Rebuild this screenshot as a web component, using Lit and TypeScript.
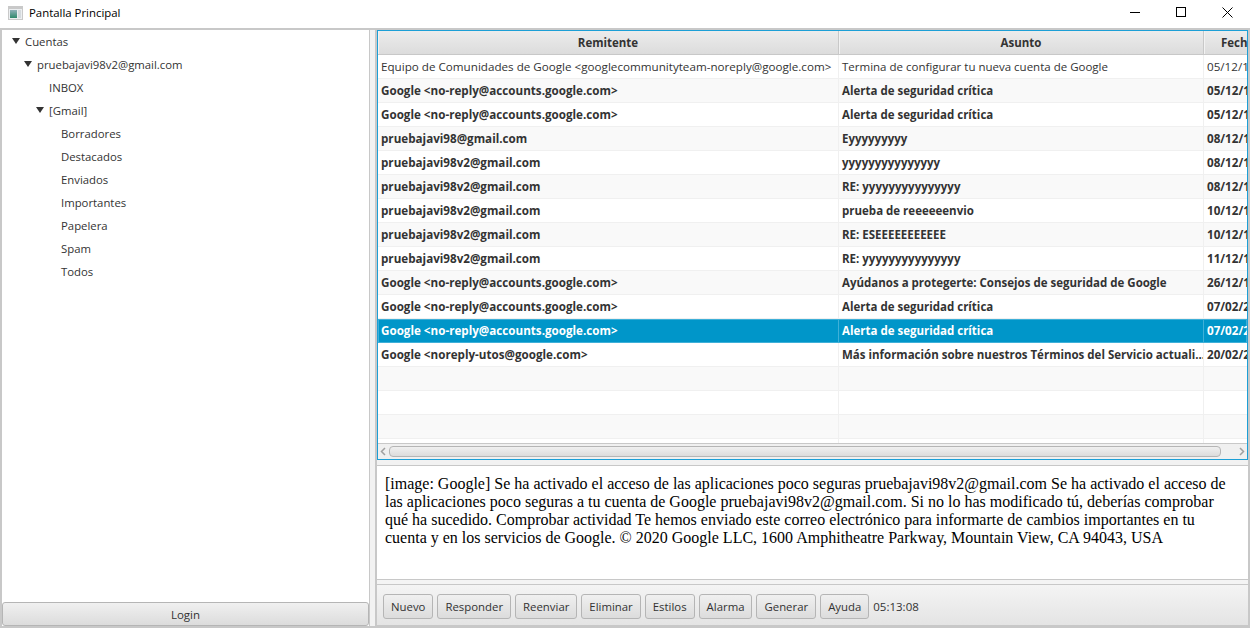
import { LitElement, html, css } from 'lit';
import { customElement } from 'lit/decorators.js';

type Mail = { from: string; subject: string; date: string; read?: boolean; selected?: boolean };

const MAILS: Mail[] = [
  { from: 'Equipo de Comunidades de Google <googlecommunityteam-noreply@google.com>', subject: 'Termina de configurar tu nueva cuenta de Google', date: '05/12/19', read: true },
  { from: 'Google <no-reply@accounts.google.com>', subject: 'Alerta de seguridad crítica', date: '05/12/19' },
  { from: 'Google <no-reply@accounts.google.com>', subject: 'Alerta de seguridad crítica', date: '05/12/19' },
  { from: 'pruebajavi98@gmail.com', subject: 'Eyyyyyyyyy', date: '08/12/19' },
  { from: 'pruebajavi98v2@gmail.com', subject: 'yyyyyyyyyyyyyyy', date: '08/12/19' },
  { from: 'pruebajavi98v2@gmail.com', subject: 'RE: yyyyyyyyyyyyyyy', date: '08/12/19' },
  { from: 'pruebajavi98v2@gmail.com', subject: 'prueba de reeeeeenvio', date: '10/12/19' },
  { from: 'pruebajavi98v2@gmail.com', subject: 'RE: ESEEEEEEEEEEE', date: '10/12/19' },
  { from: 'pruebajavi98v2@gmail.com', subject: 'RE: yyyyyyyyyyyyyyy', date: '11/12/19' },
  { from: 'Google <no-reply@accounts.google.com>', subject: 'Ayúdanos a protegerte: Consejos de seguridad de Google', date: '26/12/19' },
  { from: 'Google <no-reply@accounts.google.com>', subject: 'Alerta de seguridad crítica', date: '07/02/20' },
  { from: 'Google <no-reply@accounts.google.com>', subject: 'Alerta de seguridad crítica', date: '07/02/20', selected: true },
  { from: 'Google <noreply-utos@google.com>', subject: 'Más información sobre nuestros Términos del Servicio actuali...', date: '20/02/20' },
];

const TREE: { label: string; level: number; open?: boolean }[] = [
  { label: 'Cuentas', level: 0, open: true },
  { label: 'pruebajavi98v2@gmail.com', level: 1, open: true },
  { label: 'INBOX', level: 2 },
  { label: '[Gmail]', level: 2, open: true },
  { label: 'Borradores', level: 3 },
  { label: 'Destacados', level: 3 },
  { label: 'Enviados', level: 3 },
  { label: 'Importantes', level: 3 },
  { label: 'Papelera', level: 3 },
  { label: 'Spam', level: 3 },
  { label: 'Todos', level: 3 },
];

const BUTTONS = ['Nuevo', 'Responder', 'Reenviar', 'Eliminar', 'Estilos', 'Alarma', 'Generar', 'Ayuda'];

const BODY =
  '[image: Google] Se ha activado el acceso de las aplicaciones poco seguras pruebajavi98v2@gmail.com Se ha activado el acceso de las aplicaciones poco seguras a tu cuenta de Google pruebajavi98v2@gmail.com. Si no lo has modificado tú, deberías comprobar qué ha sucedido. Comprobar actividad Te hemos enviado este correo electrónico para informarte de cambios importantes en tu cuenta y en los servicios de Google. © 2020 Google LLC, 1600 Amphitheatre Parkway, Mountain View, CA 94043, USA';

@customElement('app-root')
export class AppRoot extends LitElement {
  static styles = css`
    :host {
      display: flex;
      flex-direction: column;
      width: 1250px;
      height: 628px;
      overflow: hidden;
      background: #fff;
      font-family: 'Open Sans', 'Noto Sans', sans-serif;
      font-size: 11.5px;
      color: #333;
    }

    .titlebar {
      display: flex;
      align-items: center;
      height: 28px;
      padding-bottom: 3px;
      box-sizing: border-box;
      flex: none;
      background: #fff;
      color: #000;
    }
    .titlebar .app-icon {
      margin-left: 8px;
      margin-right: 6px;
    }
    .titlebar .title {
      flex: 1;
      font-size: 11.4px;
    }
    .win-btn {
      width: 46px;
      height: 25px;
      display: flex;
      align-items: center;
      justify-content: center;
    }

    .main {
      flex: 1;
      display: flex;
      min-height: 0;
      background: #c8c8c8;
      padding: 2px 2px 2px 2px;
    }

    .left {
      width: 367px;
      flex: none;
      display: flex;
      flex-direction: column;
      background: #fff;
    }
    .tree {
      flex: 1;
      font-size: 11.35px;
    }
    .tree-row {
      display: flex;
      align-items: center;
      height: 23px;
    }
    .arrow {
      width: 8px;
      height: 6px;
      flex: none;
      margin-right: 5px;
      margin-top: -1px;
    }
    .login {
      height: 24px;
      flex: none;
      display: flex;
      align-items: center;
      justify-content: center;
      box-sizing: border-box;
      border: 1px solid #b5b5b5;
      border-radius: 3px;
      background: linear-gradient(#f0f0f0, #dcdcdc);
    }

    .divider {
      width: 8px;
      flex: none;
      background: #f2f2f2;
      border-left: 1px solid #c8c8c8;
      border-right: 2px solid #c8c8c8;
      box-sizing: border-box;
    }

    .right {
      flex: 1;
      min-width: 0;
      display: flex;
      flex-direction: column;
      background: #f4f4f4;
      margin-bottom: 1px;
    }

    .table {
      height: 430px;
      flex: none;
      box-sizing: border-box;
      border: 1px solid #1c9fd6;
      background: #fff;
      display: flex;
      flex-direction: column;
      overflow: hidden;
      position: relative;
    }
    .cols {
      display: grid;
      grid-template-columns: 461px 365px 1fr;
    }
    .head {
      height: 24px;
      flex: none;
      background: linear-gradient(#ececec, #dcdcdc);
      border-bottom: 1px solid #c8c8c8;
      box-sizing: border-box;
      font-weight: 700;
      font-size: 11.5px;
    }
    .head > div {
      display: flex;
      align-items: center;
      justify-content: center;
      border-right: 1px solid #c8c8c8;
      box-shadow: inset 1px 0 0 #f2f2f2;
    }
    .head > div:last-child {
      justify-content: flex-start;
      padding-left: 17px;
      border-right: none;
    }
    .row {
      height: 24px;
      flex: none;
      box-sizing: border-box;
      border-bottom: 1px solid #f0f0f0;
      background: #fff;
      font-weight: 700;
      font-size: 11.65px;
      line-height: 24px;
    }
    .row:nth-child(even) {
      background: #f9f9f9;
    }
    .row.read {
      font-weight: 400;
    }
    .row > div {
      padding: 0 3px;
      border-right: 1px solid #f0f0f0;
      white-space: nowrap;
      overflow: hidden;
    }
    .row > div:nth-child(2) {
      font-size: 11.5px;
    }
    .row > div:last-child {
      border-right: none;
    }
    .row.selected {
      background: #0096c9;
      color: #fff;
      border-bottom: none;
      box-shadow: inset 0 0 0 1px #3fb0d8;
    }
    .row.selected > div {
      border-right-color: #3fb0d8;
    }

    .hbar {
      position: absolute;
      left: 0;
      right: 0;
      bottom: 0;
      height: 13px;
      padding: 1px 0;
      box-sizing: content-box;
      display: flex;
      align-items: center;
      background: #f0f0f0;
      border-top: 1px solid #c8c8c8;
    }
    .hbar svg {
      flex: none;
      width: 11px;
      height: 11px;
    }
    .hbar .next {
      position: absolute;
      right: 0;
    }
    .thumb {
      flex: 1;
      height: 11px;
      box-sizing: border-box;
      border: 1px solid #b5b5b5;
      border-radius: 4px;
      background: linear-gradient(#f0f0f0, #dcdcdc);
      margin-right: 26px;
    }

    .sep {
      height: 6px;
      flex: none;
      box-sizing: border-box;
      background: #f2f2f2;
      border-bottom: 1px solid #c8c8c8;
    }

    .body {
      height: 114px;
      flex: none;
      box-sizing: border-box;
      background: #fff;
      padding: 9px 8px;
      font-family: 'Liberation Serif', serif;
      font-size: 16px;
      line-height: 18px;
      color: #000;
      border-bottom: 1px solid #c8c8c8;
    }

    .toolbar {
      flex: 1;
      display: flex;
      align-items: center;
      gap: 4px;
      padding: 3px 6px 0;
      box-sizing: border-box;
      border-top: 1px solid #c8c8c8;
      margin-top: 4px;
      background: linear-gradient(#f4f4f4, #e4e4e4);
    }
    .toolbar button {
      height: 25px;
      padding: 0 7px;
      font: inherit;
      font-size: 11.38px;
      color: #333;
      border: 1px solid #b5b5b5;
      border-radius: 3px;
      background: linear-gradient(#f0f0f0, #dcdcdc);
    }
  `;

  render() {
    return html`
      <div class="titlebar">
        <svg class="app-icon" width="15" height="14" viewBox="0 0 15 14">
          <defs>
            <linearGradient id="ic" x1="0" y1="0" x2="0" y2="1">
              <stop offset="0" stop-color="#8fb0b8" />
              <stop offset="1" stop-color="#2f8a6c" />
            </linearGradient>
          </defs>
          <rect x="0" y="0" width="15" height="14" fill="#c9c9c9" />
          <rect x="1" y="3" width="13" height="10" fill="#eceff1" />
          <rect x="2" y="4" width="7" height="8" fill="url(#ic)" />
          <rect x="10" y="4" width="3" height="8" fill="#d5dade" />
        </svg>
        <span class="title">Pantalla Principal</span>
        <div class="win-btn">
          <svg width="11" height="11" viewBox="0 0 11 11"><path d="M0 5.5h10" stroke="#000" /></svg>
        </div>
        <div class="win-btn">
          <svg width="11" height="11" viewBox="0 0 11 11"><rect x="0.5" y="0.5" width="9" height="9" fill="none" stroke="#000" /></svg>
        </div>
        <div class="win-btn">
          <svg width="11" height="11" viewBox="0 0 11 11"><path d="M0.5 0.5l10 10M10.5 0.5l-10 10" stroke="#000" /></svg>
        </div>
      </div>

      <div class="main">
        <div class="left">
          <div class="tree">
            ${TREE.map(
              (t) => html`
                <div class="tree-row" style="padding-left:${10 + t.level * 12}px">
                  ${t.open
                    ? html`<svg class="arrow" viewBox="0 0 8 6"><path d="M0 0h8L4 6z" fill="#333" /></svg>`
                    : html`<span class="arrow"></span>`}
                  <span>${t.label}</span>
                </div>
              `
            )}
          </div>
          <div class="login">Login</div>
        </div>

        <div class="divider"></div>

        <div class="right">
          <div class="table">
            <div class="cols head">
              <div>Remitente</div>
              <div>Asunto</div>
              <div>Fecha</div>
            </div>
            <div>
              ${MAILS.map(
                (m) => html`
                  <div class="cols row ${m.read ? 'read' : ''} ${m.selected ? 'selected' : ''}">
                    <div>${m.from}</div>
                    <div>${m.subject}</div>
                    <div>${m.date}</div>
                  </div>
                `
              )}
              ${[0, 1, 2, 3].map(
                () => html`
                  <div class="cols row"><div></div><div></div><div></div></div>
                `
              )}
            </div>
            <div class="hbar">
              <svg viewBox="0 0 11 11"><path d="M7 2L3.5 5.5 7 9" fill="none" stroke="#a0a0a0" stroke-width="1.5" /></svg>
              <div class="thumb"></div>
              <svg class="next" viewBox="0 0 11 11"><path d="M4 2l3.5 3.5L4 9" fill="none" stroke="#a0a0a0" stroke-width="1.5" /></svg>
            </div>
          </div>
          <div class="sep"></div>
          <div class="body">${BODY}</div>
          <div class="toolbar">
            ${BUTTONS.map((b) => html`<button>${b}</button>`)}
            <span>05:13:08</span>
          </div>
        </div>
      </div>
    `;
  }
}
